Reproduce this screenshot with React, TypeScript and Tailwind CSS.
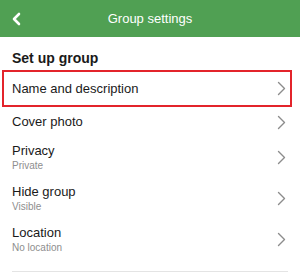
const font = { fontFamily: '"Liberation Sans", Arial, sans-serif' }

function Chevron() {
  return (
    <svg width="9" height="15" viewBox="0 0 9 15" className="shrink-0">
      <polyline points="1.5,1.5 7.5,7.5 1.5,13.5" fill="none" stroke="#8c8c8c" strokeWidth="1.4" strokeLinecap="round" strokeLinejoin="round" />
    </svg>
  )
}

const rows = [
  { title: "Privacy", sub: "Private" },
  { title: "Hide group", sub: "Visible" },
  { title: "Location", sub: "No location" },
]

export default function App() {
  return (
    <div className="w-[300px] h-[274px] overflow-hidden bg-white" style={font}>
      <div className="h-[37px] bg-[#50a053] flex items-center relative">
        <svg width="10" height="14" viewBox="0 0 10 14" className="ml-[12px]">
          <polyline points="7,2 2,7 7,12" fill="none" stroke="#ffffff" strokeWidth="2.6" strokeLinecap="round" strokeLinejoin="round" />
        </svg>
        <div className="absolute inset-0 flex items-center justify-center text-white text-[13px] font-medium">
          Group settings
        </div>
      </div>

      <div className="pt-[11px] pl-[12px] h-[33px] text-[14px] leading-[20px] font-bold text-[#1a1a1a]">
        Set up group
      </div>

      <div className="ml-[2px] w-[290px] h-[37px] border-2 border-[#e3242b] flex items-center justify-between pl-[8px] pr-[4px] text-[13px] text-[#1a1a1a]">
        <span>Name and description</span>
        <Chevron />
      </div>

      <div className="h-[30px] flex items-center justify-between pl-[12px] pr-[14px] text-[13px] text-[#1a1a1a]">
        <span>Cover photo</span>
        <Chevron />
      </div>

      {rows.map((r) => (
        <div key={r.title} className="h-[41px] flex items-center justify-between pl-[12px] pr-[14px]">
          <div className="flex flex-col">
            <span className="text-[13px] leading-[16px] text-[#1a1a1a]">{r.title}</span>
            <span className="text-[10px] leading-[13px] text-[#8e8e8e]">{r.sub}</span>
          </div>
          <Chevron />
        </div>
      ))}

      <div className="mt-[11px] ml-[12px] w-[276px] h-px bg-[#e4e4e4]" />
    </div>
  )
}
